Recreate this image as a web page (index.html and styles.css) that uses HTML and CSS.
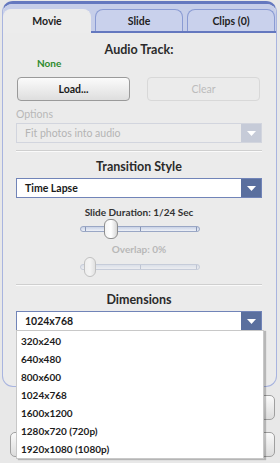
FILE: index.html
```html
<!DOCTYPE html>
<html>
<head>
<meta charset="utf-8">
<link rel="stylesheet" href="styles.css">
</head>
<body>
<div class="page">
  <div class="panel">
    <div class="tabs">
      <div class="tab active">Movie</div>
      <div class="tab">Slide</div>
      <div class="tab">Clips (0)</div>
    </div>
    <div class="body">
      <div class="heading h-audio">Audio Track:</div>
      <div class="none">None</div>
      <div class="btnrow">
        <div class="btn">Load...</div>
        <div class="btn disabled">Clear</div>
      </div>
      <div class="label dim">Options</div>
      <div class="select disabled"><span>Fit photos into audio</span><i class="arrow"><svg width="9" height="5" viewBox="0 0 9 5"><path d="M0 0h9L4.5 5z" fill="#fff"/></svg></i></div>
      <div class="sep"></div>
      <div class="heading">Transition Style</div>
      <div class="select"><span>Time Lapse</span><i class="arrow"><svg width="9" height="5" viewBox="0 0 9 5"><path d="M0 0h9L4.5 5z" fill="#fff"/></svg></i></div>
      <div class="sublabel">Slide Duration: 1/24 Sec</div>
      <div class="slider">
        <div class="track"><b class="tick t1"></b><b class="tick t2"></b><b class="tick t3"></b></div>
        <div class="thumb" style="left:24px"></div>
      </div>
      <div class="sublabel dim">Overlap: 0%</div>
      <div class="slider disabled">
        <div class="track"><b class="tick t1"></b><b class="tick t2"></b><b class="tick t3"></b></div>
        <div class="thumb" style="left:4px"></div>
      </div>
      <div class="sep sep2"></div>
      <div class="heading">Dimensions</div>
      <div class="select dims"><span>1024x768</span><i class="arrow"><svg width="9" height="5" viewBox="0 0 9 5"><path d="M0 0h9L4.5 5z" fill="#fff"/></svg></i>
        <ul class="menu">
          <li>320x240</li>
          <li>640x480</li>
          <li>800x600</li>
          <li>1024x768</li>
          <li>1600x1200</li>
          <li>1280x720 (720p)</li>
          <li>1920x1080 (1080p)</li>
        </ul>
      </div>
    </div>
  </div>
  <div class="below">
    <div class="brow"><div class="gbtn wide"></div></div>
    <div class="brow"><div class="gbtn"></div><div class="gbtn"></div></div>
  </div>
</div>
</body>
</html>
```
FILE: styles.css
```css
* { box-sizing: border-box; }
html, body { margin: 0; padding: 0; }
body {
  width: 280px;
  height: 463px;
  overflow: hidden;
  background: #e8e8e8;
  font-family: Lato, "Open Sans", sans-serif;
  color: #1a1a1a;
}
.page { padding: 1px 3px 0 2px; }
.panel {
  border: 1px solid #a8b4df;
  border-top: 3px solid #6478bf;
  border-radius: 11px 11px 11px 11px;
  background: #ebebeb;
}
.tabs {
  display: flex;
  gap: 4px;
  padding: 5px 1px 0 0;
  background: #c6cee9;
  border-radius: 9px 9px 0 0;
  height: 29px;
  border-bottom: 2px solid #6478bf;
}
.tab {
  flex: 1;
  height: 22px;
  border: 1px solid #8a9bd3;
  border-bottom: none;
  border-radius: 8px 8px 0 0;
  background: #c9d1ec;
  font-size: 10.5px;
  font-weight: 700;
  text-align: center;
  line-height: 22px;
  color: #222;
}
.tab.active {
  background: #ececec;
  border-color: #ececec;
  height: 24px;
  position: relative;
  z-index: 1;
}
.body {
  display: flex;
  flex-direction: column;
  padding: 9px 14px 0 13px;
  height: 353px;
  position: relative;
}
.heading {
  text-align: center;
  font-size: 12.5px;
  font-weight: 700;
  color: #2a2a2a;
  line-height: 16px;
}
.none {
  color: #2d8a2d;
  font-size: 10px;
  font-weight: 700;
  padding-left: 21px;
  line-height: 12px;
  margin-top: -1px;
}
.btnrow {
  display: flex;
  gap: 17px;
  margin-top: 8px;
  padding: 0 2px 0 1px;
}
.btn {
  flex: 1;
  height: 24px;
  border: 1px solid #9a9a9a;
  border-radius: 4px;
  background: linear-gradient(#fbfbfb, #dedede);
  font-size: 10.5px;
  font-weight: 700;
  text-align: center;
  line-height: 22px;
}
.btn.disabled {
  border-color: #d8d8d8;
  background: #ebebeb;
  color: #bcbcbc;
  font-weight: 400;
}
.label {
  font-size: 10.5px;
  margin-top: 6px;
  line-height: 14px;
}
.dim { color: #b8b8b8 !important; }
.select {
  position: relative;
  display: flex;
  height: 20px;
  border: 1px solid #7184b8;
  background: #fff;
  font-size: 10.5px;
  font-weight: 700;
  align-items: center;
  margin-top: 2px;
}
.select span { flex: 1; padding-left: 8px; }
.select .arrow {
  width: 20px;
  align-self: stretch;
  background: #5a6f9e;
  display: flex;
  align-items: center;
  justify-content: center;
}
.select.disabled {
  border-color: #d2d5de;
  background: #ececec;
  color: #b4b4b4;
  font-weight: 400;
}
.select.disabled .arrow { background: #c6cbd8; }
.sep {
  height: 2px;
  border-top: 1px solid #cfcfcf;
  border-bottom: 1px solid #fafafa;
  margin: 7px 0 7px 0;
}
.sep2 { margin-top: 7px; margin-bottom: 6px; }
.heading + .select { margin-top: 3px; }
.sublabel {
  text-align: center;
  font-size: 10px;
  font-weight: 700;
  color: #333;
  line-height: 14px;
}
.select + .sublabel { margin-top: 7px; }
.slider {
  position: relative;
  width: 120px;
  height: 20px;
  margin: 0 auto 3px auto;
  left: 1px;
}
.slider.disabled { margin-top: 1px; margin-bottom: 0; }
.track {
  position: absolute;
  left: 0; right: 0; top: 7px;
  height: 6px;
  border: 1px solid #9aa7c5;
  border-radius: 3px;
  background: linear-gradient(#c9d2e6, #eef1f8);
}
.tick {
  position: absolute;
  top: 0;
  width: 1px;
  height: 4px;
  background: #8896b6;
}
.t1 { left: 4px; } .t2 { left: 59px; } .t3 { left: 115px; }
.thumb {
  position: absolute;
  top: 0;
  width: 14px;
  height: 20px;
  border: 1px solid #8e8e8e;
  border-radius: 6px;
  background: linear-gradient(90deg, #f4f4f4, #ffffff 50%, #d6d6d6);
}
.slider.disabled { opacity: 0.45; }
.slider.disabled .thumb { width: 12px; }
.menu {
  position: absolute;
  left: -1px;
  top: 18px;
  width: 248px;
  margin: 0;
  padding: 1px 0 0 0;
  list-style: none;
  background: #fff;
  border: 1px solid #c8c8c8;
  box-shadow: 2px 1px 1px rgba(0,0,0,0.22);
  z-index: 5;
}
.menu li {
  height: 18px;
  line-height: 18px;
  font-size: 10px;
  font-weight: 700;
  padding-left: 4px;
  color: #1c1c1c;
}
.below {
  display: flex;
  flex-direction: column;
  gap: 12px;
  padding: 8px 2px 0 8px;
}
.brow { display: flex; gap: 6px; justify-content: flex-end; }
.gbtn {
  flex: 1;
  height: 25px;
  border: 1px solid #a0a0a0;
  border-radius: 5px;
  background: linear-gradient(#fafafa, #dcdcdc);
}
.gbtn.wide { flex: 0 0 140px; }
```
